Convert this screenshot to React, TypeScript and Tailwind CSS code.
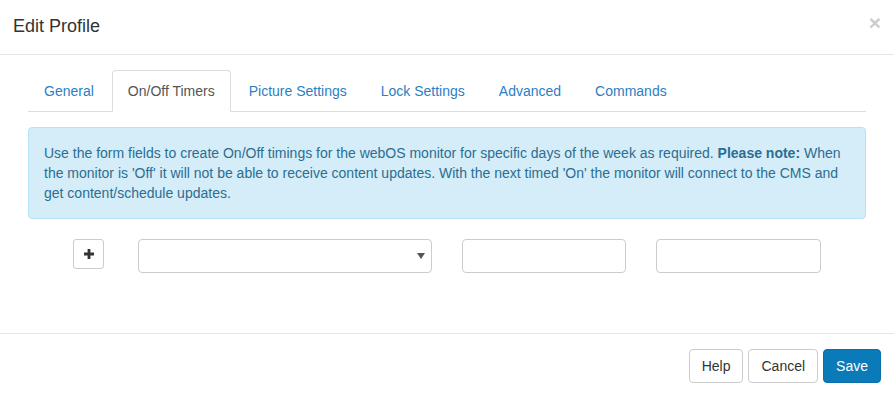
import React from "react";

export default function App() {
  const tabs = ["General", "On/Off Timers", "Picture Settings", "Lock Settings", "Advanced", "Commands"];
  return (
    <div className="w-[894px] h-[396px] bg-white text-[14px] text-[#333] overflow-hidden" style={{ fontFamily: '"Liberation Sans", Arial, sans-serif' }}>
      {/* Header */}
      <div className="h-[55px] border-b border-[#e5e5e5] flex items-center justify-between pl-[13px] pr-[13px]">
        <h4 className="text-[18px] leading-[26px] text-[#333] mb-[2px]">Edit Profile</h4>
        <span className="text-[21px] font-bold leading-none text-[#cccccc] mb-[10px]">×</span>
      </div>
      {/* Body */}
      <div className="h-[279px] border-b border-[#e5e5e5] px-[28px] pt-[15px]">
        <ul className="flex border-b border-[#ddd] h-[42px]">
          {tabs.map((t, i) =>
            i === 1 ? (
              <li key={t} className="mr-[2px] -mb-px">
                <span className="block px-[15px] py-[10px] leading-[20px] border border-[#ddd] border-b-white bg-white rounded-t-[4px] text-[#555]">{t}</span>
              </li>
            ) : (
              <li key={t} className="mr-[2px] -mb-px">
                <span className="block px-[15px] py-[10px] leading-[20px] border border-transparent text-[#2b80c3]">{t}</span>
              </li>
            )
          )}
        </ul>
        <div className="mt-[15px] border border-[#b4e3f1] bg-[#d5edf8] rounded-[4px] px-[15px] py-[15px] leading-[20px] text-[#2b6e92]">
          Use the form fields to create On/Off timings for the webOS monitor for specific days of the week as required. <b>Please note:</b> When the monitor is 'Off' it will not be able to receive content updates. With the next timed 'On' the monitor will connect to the CMS and get content/schedule updates.
        </div>
        <div className="mt-[20px] flex items-start">
          <button className="ml-[45px] w-[31px] h-[30px] border border-[#ccc] rounded-[3px] bg-white flex items-center justify-center">
            <svg width="10" height="10" viewBox="0 0 10 10"><path d="M3.6 0h2.8v3.6H10v2.8H6.4V10H3.6V6.4H0V3.6h3.6z" fill="#333" /></svg>
          </button>
          <div className="ml-[34px] w-[294px] h-[34px] border border-[#ccc] rounded-[4px] bg-white flex items-center justify-end pr-[6px]">
            <svg width="8" height="6" viewBox="0 0 8 6"><path d="M0 0h8L4 6z" fill="#555" /></svg>
          </div>
          <div className="ml-[30px] w-[164px] h-[34px] border border-[#ccc] rounded-[4px] bg-white" />
          <div className="ml-[30px] w-[165px] h-[34px] border border-[#ccc] rounded-[4px] bg-white" />
        </div>
      </div>
      {/* Footer */}
      <div className="flex justify-end pt-[15px] pr-[13px] gap-[5px]">
        <button className="h-[34px] px-[12px] border border-[#ccc] rounded-[4px] bg-white text-[#333] leading-[20px]">Help</button>
        <button className="h-[34px] px-[12px] border border-[#ccc] rounded-[4px] bg-white text-[#333] leading-[20px]">Cancel</button>
        <button className="h-[34px] px-[12px] border border-[#0a70ab] rounded-[4px] bg-[#0a7ab8] text-white leading-[20px]">Save</button>
      </div>
    </div>
  );
}
